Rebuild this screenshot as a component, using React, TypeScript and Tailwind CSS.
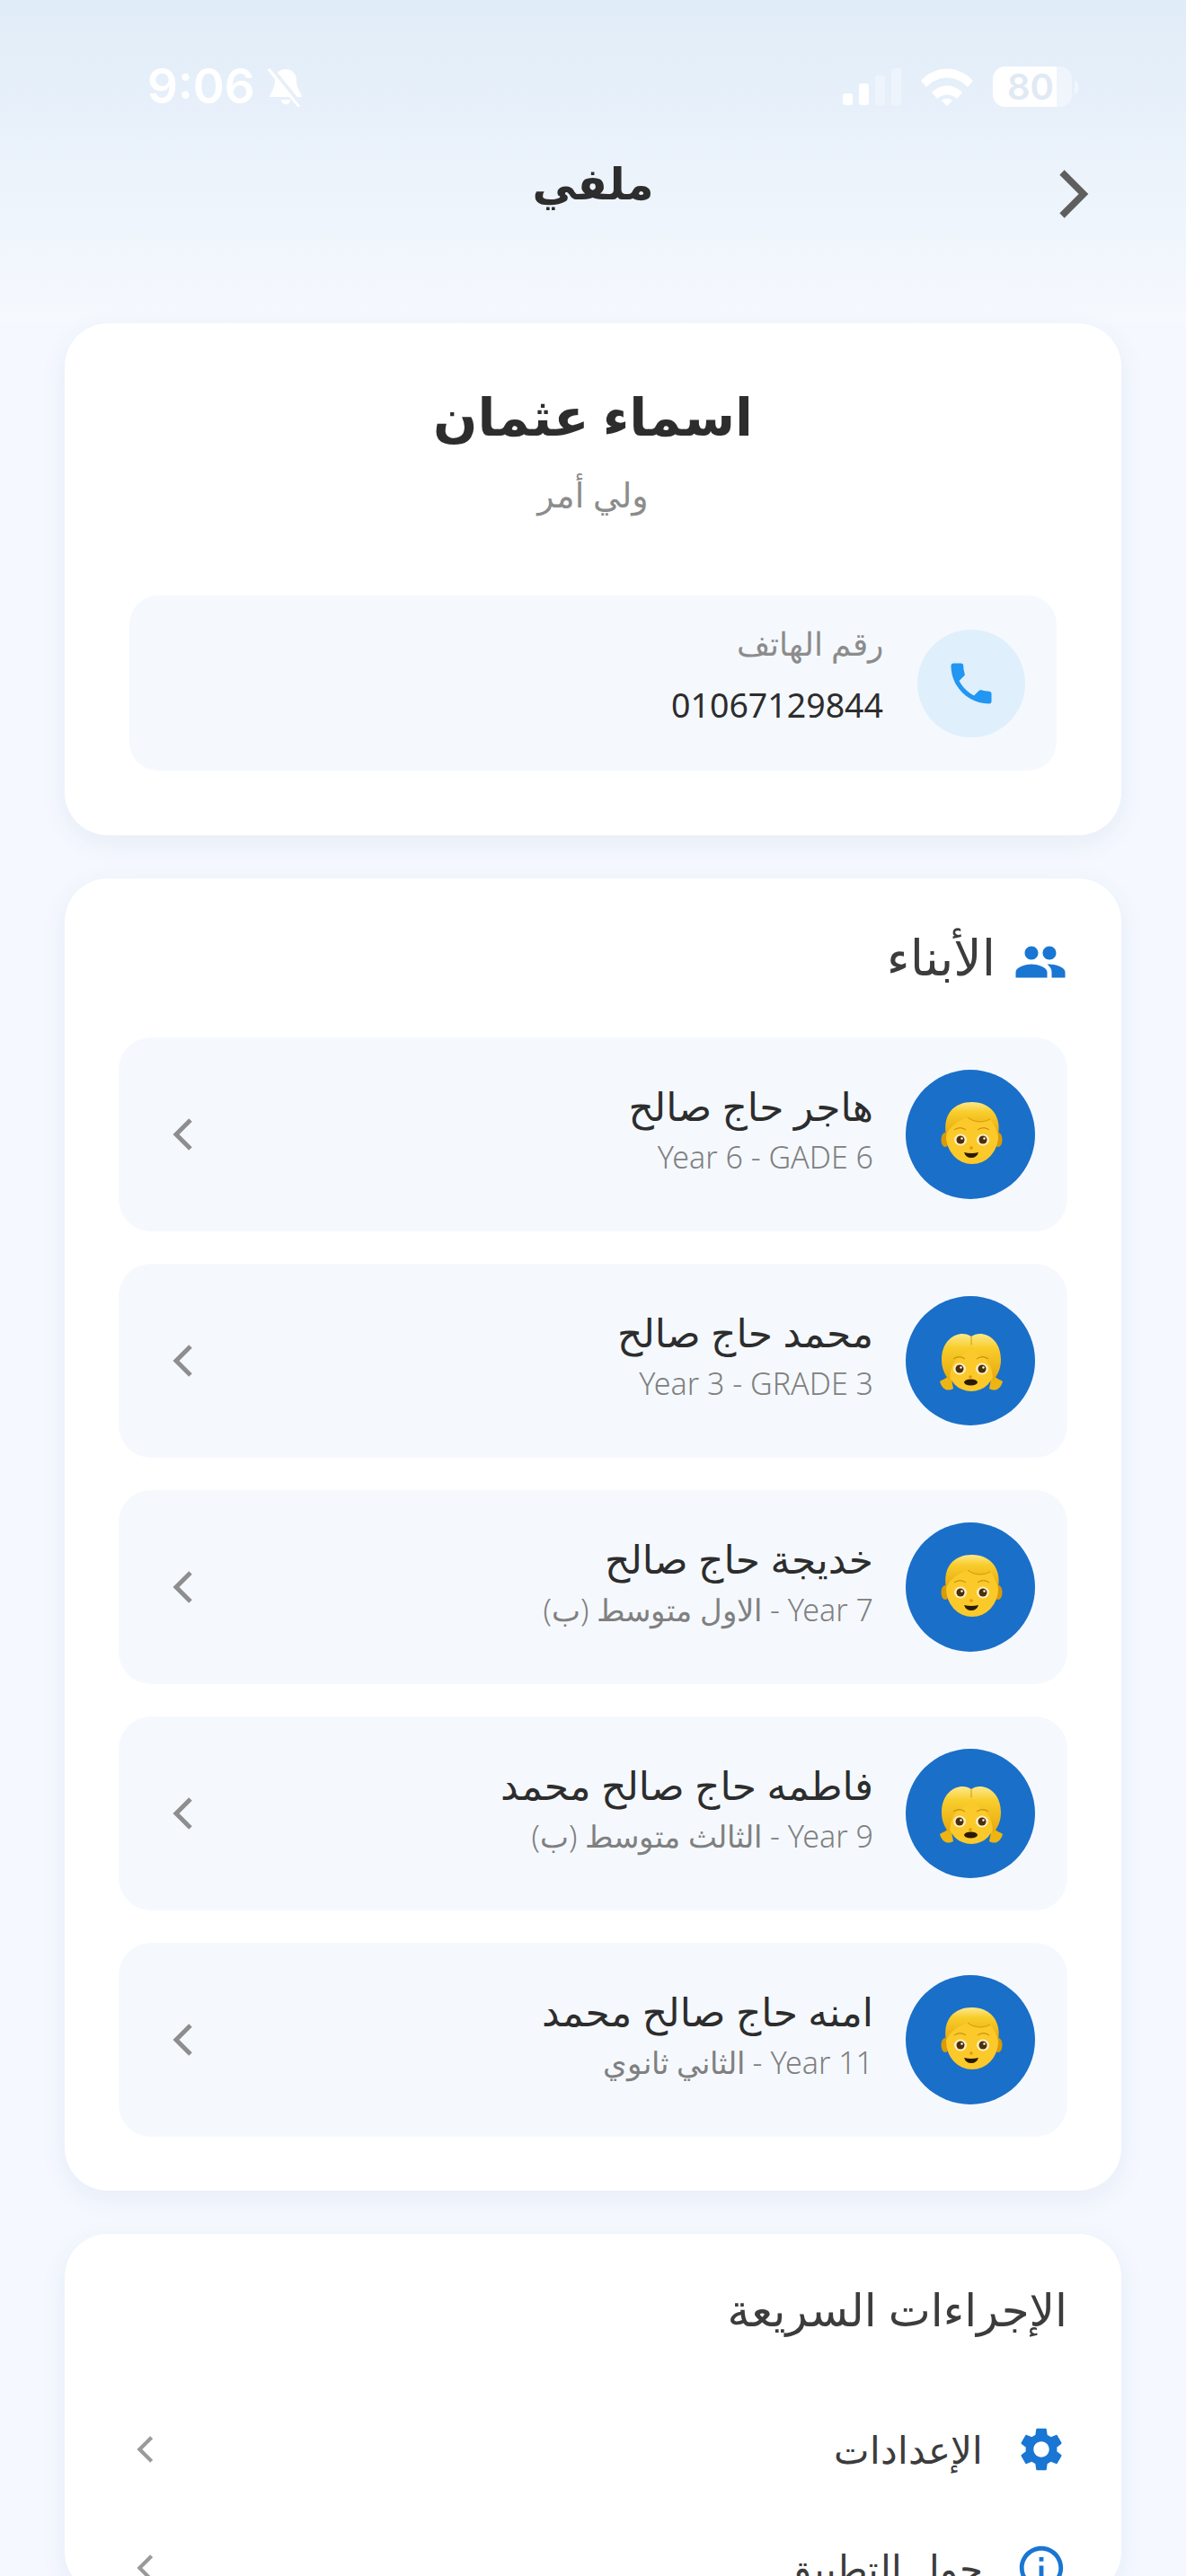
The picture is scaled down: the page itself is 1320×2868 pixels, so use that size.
import { MdInfoOutline, MdPeople, MdPhone, MdSettings } from "react-icons/md";

const arabic = "font-['Noto_Sans','DejaVu_Sans',sans-serif]";

const children = [
  { name: "هاجر حاج صالح", sub: "Year 6 - GADE 6", girl: false },
  { name: "محمد حاج صالح", sub: "Year 3 - GRADE 3", girl: true },
  { name: "خديجة حاج صالح", sub: "Year 7 - الاول متوسط (ب)", girl: false },
  { name: "فاطمه حاج صالح محمد", sub: "Year 9 - الثالث متوسط (ب)", girl: true },
  { name: "امنه حاج صالح محمد", sub: "Year 11 - الثاني ثانوي", girl: false },
];

function Kid({ girl }: { girl: boolean }) {
  const id = girl ? "hairG" : "hairB";
  return (
    <svg viewBox="0 -7 120 120" className="h-[120px] w-[120px]">
      <defs>
        <linearGradient id={id} x1="0" y1="0" x2="0" y2="1">
          <stop offset="0" stopColor="#fde98c" />
          <stop offset="0.3" stopColor="#f8cd2c" />
          <stop offset="1" stopColor="#e8a80c" />
        </linearGradient>
      </defs>
      {girl ? (
        <>
          <path d="M38 68C33 73 29 74 26 76c2 8 8 12 15 8Z" fill="#eeb512" />
          <path d="M84 68c5 5 9 6 12 8-2 8-8 12-15 8Z" fill="#eeb512" />
          <ellipse cx="61" cy="61" rx="26" ry="26" fill="#fbc92a" />
          <path d="M61 26C50 18 28 26 28 52c0 10 4 18 9 23 0-9 2-18 8-24 8-4 15-10 16-17 1 7 8 13 16 17 6 6 8 15 8 24 5-5 9-13 9-23 0-26-22-34-33-26Z" fill={`url(#${id})`} />
          <path d="M61 25v10" stroke="#d49a0a" strokeWidth="1" />
        </>
      ) : (
        <>
          <ellipse cx="32" cy="59" rx="4.500" ry="8" fill="#d99a08" />
          <ellipse cx="91" cy="59" rx="4.500" ry="8" fill="#d99a08" />
          <ellipse cx="62" cy="55" rx="29" ry="31" fill="#fbc92a" />
          <path d="M33 54C29 30 42 17 62 17c20 0 33 15 29 37-2-7-5-13-9-18-10 5-21 3-26-2-8 4-19 9-23 20Z" fill={`url(#${id})`} />
          <path d="M57 34c6 5 16 7 25 2" fill="none" stroke="#d49a0a" strokeWidth="1" />
        </>
      )}
      <g transform={girl ? "translate(-1 3)" : "translate(0 0)"}>
        <path d="M42 48c4-3 9-3 13 0" fill="none" stroke="#b98308" strokeWidth="1" />
        <path d="M68 48c4-3 9-3 13 0" fill="none" stroke="#b98308" strokeWidth="1" />
        <ellipse cx="49" cy="59" rx="7" ry="6.500" fill="#fff0c2" />
        <ellipse cx="74" cy="59" rx="7" ry="6.500" fill="#fff0c2" />
        <circle cx="49" cy="59" r="4.500" fill="#4b2e0b" />
        <circle cx="74" cy="59" r="4.500" fill="#4b2e0b" />
        <circle cx="50.500" cy="57.500" r="1.200" fill="#fff" />
        <circle cx="75.500" cy="57.500" r="1.200" fill="#fff" />
        <circle cx="61" cy="68" r="1.800" fill="#e8940c" />
      </g>
      {girl ? (
        <ellipse cx="60.500" cy="77" rx="7.500" ry="3.500" fill="#2a1a05" />
      ) : (
        <path d="M53 73q8 2 16 0-2 6-8 6t-8-6Z" fill="#2a1a05" />
      )}
    </svg>
  );
}

function Chevron({ className }: { className: string }) {
  return (
    <svg viewBox="0 0 24 36" fill="none" stroke="currentColor" strokeWidth="5" className={className}>
      <path d="M20 2 4 18l16 16" />
    </svg>
  );
}

export default function App() {
  return (
    <div dir="rtl" className={`h-[2868px] overflow-hidden bg-[#f5f8fe] ${arabic}`}>
      {/* Header */}
      <div className="h-[360px] bg-gradient-to-b from-[#e0ecf8] to-[#f6f9fe]">
        <div dir="ltr" className="flex h-[119px] items-end justify-between pl-[164px] pr-[120px]">
          <div className="flex items-center gap-[14px] text-white">
            <span className="font-['Inter',sans-serif] text-[53px] leading-[45px] font-semibold">9:06</span>
            <svg viewBox="0 0 40 44" className="h-[44px] w-[40px]" fill="#fff">
              <path d="M20 2c8 0 12 6 12 13 0 9 6 14 6 18H2c0-4 6-9 6-18C8 8 12 2 20 2Z" />
              <path d="M15 36h10c0 7-10 7-10 0Z" />
              <path d="M3 1l34 42" stroke="#e7eff9" strokeWidth="6" />
              <path d="M1 2l34 42" stroke="#fff" strokeWidth="3" />
            </svg>
          </div>
          <div className="flex items-center gap-[22px]">
            <div className="flex h-[41px] items-end gap-[7px]">
              <div className="h-[13px] w-[11px] rounded-[3px] bg-white" />
              <div className="h-[24px] w-[11px] rounded-[3px] bg-white" />
              <div className="h-[33px] w-[11px] rounded-[3px] bg-white/30" />
              <div className="h-[41px] w-[11px] rounded-[3px] bg-white/30" />
            </div>
            <svg viewBox="0 0 58 42" className="h-[42px] w-[58px]" fill="#fff">
              <path d="M0 14C16-4 42-4 58 14l-6 7C39 7 19 7 6 21Z" />
              <path d="M12 27c9-10 25-10 34 0l-6 7c-6-6-16-6-22 0Z" />
              <path d="M23 38c3-3 9-3 12 0l-6 6Z" transform="translate(0 -2)" />
            </svg>
            <div className="flex items-center gap-[3px]">
              <div className="relative flex h-[45px] w-[88px] items-center rounded-[14px] bg-white/40 pl-[16px]">
                <div className="absolute inset-y-0 left-0 w-[71px] rounded-l-[14px] bg-white" />
                <span className="relative font-['Inter',sans-serif] text-[40px] leading-[45px] font-semibold text-[#e0e9f4]">80</span>
              </div>
              <div className="h-[14px] w-[4px] rounded-r-full bg-white/40" />
            </div>
          </div>
        </div>
        <div className="relative mt-[49px] flex justify-center">
          <h1 className="text-[49px] leading-[70px] font-bold text-[#2d2d2d]">ملفي</h1>
          <Chevron className="absolute top-[19px] right-[108px] h-[58px] w-[36px] rotate-180 text-[#5f5f5f]" />
        </div>
      </div>

      <div className="flex flex-col gap-[48px] px-[72px]">
        {/* Profile */}
        <section className="rounded-[48px] bg-white px-[72px] pt-[64px] pb-[72px] shadow-[0_8px_30px_rgba(30,80,160,0.07)]">
          <div className="flex flex-col items-center">
            <h2 className="text-[58px] leading-[78px] font-bold text-[#2d2d2d]">اسماء عثمان</h2>
            <p className="mt-[21px] text-[38px] leading-[54px] text-[#8c8c8c]">ولي أمر</p>
          </div>
          <div className="mt-[86px] flex h-[195px] items-center gap-[38px] rounded-[32px] bg-[#f5f9fe] px-[35px]">
            <div className="flex h-[120px] w-[120px] items-center justify-center rounded-full bg-[#e0effc]">
              <MdPhone className="h-[60px] w-[60px] text-[#2196f3]" />
            </div>
            <div className="mb-[18px] flex flex-col gap-[25px]">
              <span className="text-[36px] leading-[42px] font-light text-[#8c8c8c]">رقم الهاتف</span>
              <span className="text-[37.500px] leading-[44px] text-[#2d2d2d]">01067129844</span>
            </div>
          </div>
        </section>

        {/* Children */}
        <section className="rounded-[48px] bg-white px-[60px] pt-[57px] pb-[60px] shadow-[0_8px_30px_rgba(30,80,160,0.07)]">
          <div className="flex h-[60px] items-center gap-[20px] text-[#3c3c3c]">
            <MdPeople className="mt-[12px] h-[60px] w-[60px] text-[#1976d2]" />
            <span className="text-[55px] leading-[60px]">الأبناء</span>
          </div>
          <div className="mt-[60px] flex flex-col gap-[36px]">
            {children.map((c) => (
              <div key={c.name} className="flex h-[216px] items-center gap-[36px] rounded-[36px] bg-[#f5f9fe] pr-[36px] pl-[60px]">
                <div className="flex h-[144px] w-[144px] shrink-0 items-center justify-center rounded-full bg-[#1a6fc9]">
                  <Kid girl={c.girl} />
                </div>
                <div className="flex flex-1 flex-col">
                  <span className="text-[44px] leading-[50px] text-[#2d2d2d]">{c.name}</span>
                  <span className="text-[34px] leading-[64px] font-light text-[#808080]">{c.sub}</span>
                </div>
                <Chevron className="h-[36px] w-[24px] text-[#8e8e8e]" />
              </div>
            ))}
          </div>
        </section>

        {/* Quick actions */}
        <section className="rounded-[48px] bg-white px-[60px] pt-[54px] shadow-[0_8px_30px_rgba(30,80,160,0.07)]">
          <h3 className="text-[50px] leading-[60px] text-[#3c3c3c]">الإجراءات السريعة</h3>
          <div className="mt-[96px] flex flex-col gap-[72px]">
            <div className="flex h-[60px] items-center gap-[36px] text-[#3c3c3c]">
              <MdSettings className="h-[58px] w-[58px] text-[#1976d2]" />
              <span className="flex-1 text-[42px] leading-[54px] font-light">الإعدادات</span>
              <Chevron className="ml-[20px] h-[30px] w-[20px] text-[#9a9a9a]" />
            </div>
            <div className="flex h-[60px] items-center gap-[36px] text-[#3c3c3c]">
              <MdInfoOutline className="h-[58px] w-[58px] text-[#1976d2]" />
              <span className="flex-1 text-[42px] leading-[54px] font-light">حول التطبيق</span>
              <Chevron className="ml-[20px] h-[30px] w-[20px] text-[#9a9a9a]" />
            </div>
          </div>
        </section>
      </div>
    </div>
  );
}
